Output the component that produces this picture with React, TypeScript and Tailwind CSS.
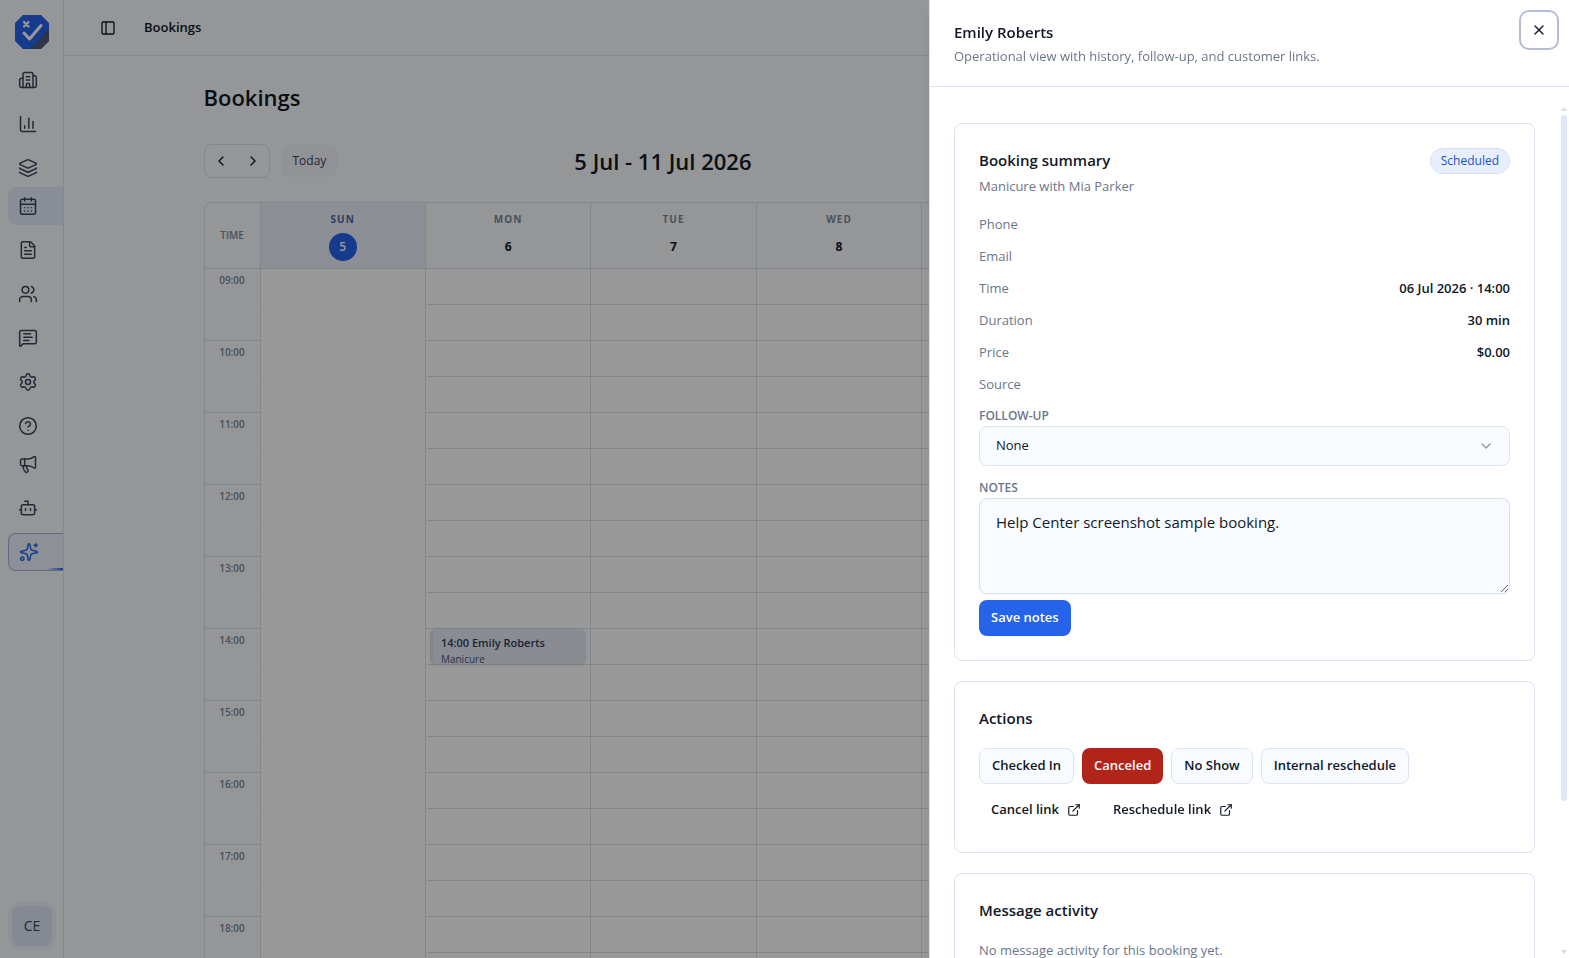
import React from "react";
import {
  Bot,
  Building2,
  CalendarDays,
  ChartColumn,
  ChevronDown,
  ChevronLeft,
  ChevronRight,
  CircleQuestionMark,
  ExternalLink,
  FileText,
  Layers,
  Megaphone,
  MessageSquareText,
  PanelLeft,
  Settings,
  Sparkles,
  Users,
  X,
  type LucideIcon,
} from "lucide-react";

type NavItem = { label: string; icon: LucideIcon; tight?: boolean; state?: "active" | "featured" };

const navItems: NavItem[] = [
  { label: "Business", icon: Building2 },
  { label: "Analytics", icon: ChartColumn },
  { label: "Services", icon: Layers },
  { label: "Bookings", icon: CalendarDays, tight: true, state: "active" },
  { label: "Documents", icon: FileText },
  { label: "Customers", icon: Users },
  { label: "Messages", icon: MessageSquareText },
  { label: "Settings", icon: Settings },
  { label: "Help", icon: CircleQuestionMark },
  { label: "Announcements", icon: Megaphone, tight: true },
  { label: "Assistant", icon: Bot },
  { label: "Upgrade", icon: Sparkles, state: "featured" },
];

const days = [
  { name: "SUN", date: 5 },
  { name: "MON", date: 6 },
  { name: "TUE", date: 7 },
  { name: "WED", date: 8 },
  { name: "THU", date: 9 },
  { name: "FRI", date: 10 },
  { name: "SAT", date: 11 },
];

const hours = ["09:00", "10:00", "11:00", "12:00", "13:00", "14:00", "15:00", "16:00", "17:00", "18:00"];

const details = [
  { label: "Phone", value: "" },
  { label: "Email", value: "" },
  { label: "Time", value: "06 Jul 2026 · 14:00" },
  { label: "Duration", value: "30 min" },
  { label: "Price", value: "$0.00" },
  { label: "Source", value: "" },
];

function Logo() {
  return (
    <svg viewBox="0 0 34 34" className="size-[34px]" aria-hidden="true">
      <defs>
        <clipPath id="logo-shape">
          <path d="M8 0h18l8 8v18l-8 8H8l-8-8V8z" />
        </clipPath>
        <linearGradient id="logo-fold" x1="0.400" y1="0.400" x2="0.800" y2="0.800">
          <stop offset="0" stopColor="#3d5596" />
          <stop offset="1" stopColor="#565c6b" />
        </linearGradient>
      </defs>
      <g clipPath="url(#logo-shape)">
        <rect width="34" height="34" fill="#2563eb" />
        <path d="M34 13 15 34h19z" fill="url(#logo-fold)" />
      </g>
      <path d="m9 18 5.500 6L26 10.500" fill="none" stroke="#fff" strokeWidth="3" strokeLinecap="round" strokeLinejoin="round" />
      <path d="m9 7 4.500 4.500M13.500 7 9 11.500" stroke="#fff" strokeWidth="2.200" strokeLinecap="round" />
    </svg>
  );
}

function Sidebar() {
  return (
    <aside className="flex w-16 shrink-0 flex-col border-r border-[#dfe4ee] bg-[#f8fafc] pt-[15px]">
      <a href="#home" aria-label="Home" className="ml-[15px] block">
        <Logo />
      </a>
      <nav className="mt-1.5 flex flex-col pl-2">
        {navItems.map(({ label, icon: Icon, tight, state }) => (
          <a
            key={label}
            href={"#" + label.toLowerCase()}
            aria-label={label}
            className={
              "relative flex h-[38px] items-center rounded-l-lg pl-2.5 " +
              (tight ? "" : "mt-1.5 ") +
              (state === "active" ? "bg-[#e4ebfa] " : "") +
              (state === "featured"
                ? "border border-r-0 border-[#a3b3da] bg-[#ebf0fb] text-[#2563eb]"
                : "text-[#38435a]")
            }
          >
            <Icon className="size-5" strokeWidth={1.8} />
            {state === "featured" && (
              <span className="absolute right-0 bottom-0 h-0.5 w-4 bg-linear-to-r from-transparent to-[#2563eb]" />
            )}
          </a>
        ))}
      </nav>
      <button
        type="button"
        className="mt-auto mb-3 ml-3 size-10 rounded-lg bg-[#dde5f7] text-sm text-[#334155] ring-4 ring-[#eff3fa]"
      >
        CE
      </button>
    </aside>
  );
}

function Calendar() {
  return (
    <div className="mt-6 overflow-hidden rounded-tl-lg border border-[#d9e0eb] bg-[#f8fafc] pr-2.5">
      <table className="w-full table-fixed border-separate border-spacing-0">
        <thead>
          <tr className="h-[66px]">
            <th className="w-14 border-r border-b border-[#d9e0eb] text-[10px] font-semibold text-[#7c8799]">TIME</th>
            {days.map((day, index) => (
              <th
                key={day.name}
                className={"border-r border-b border-[#d9e0eb] p-0 " + (index === 0 ? "bg-[#ebeffb]" : "")}
              >
                <div
                  className={
                    "text-[10px] leading-4 font-bold tracking-widest " +
                    (index === 0 ? "text-[#4a63a5]" : "text-[#7c8799]")
                  }
                >
                  {day.name}
                </div>
                <div
                  className={
                    "mx-auto mt-1.5 flex size-7 items-center justify-center rounded-full text-xs " +
                    (index === 0 ? "bg-[#2563eb] font-semibold text-white" : "font-bold text-slate-900")
                  }
                >
                  {day.date}
                </div>
              </th>
            ))}
          </tr>
        </thead>
        <tbody>
          {hours.map((hour) => (
            <React.Fragment key={hour}>
              <tr className="h-9">
                <th
                  rowSpan={2}
                  className="border-r border-b border-[#d9e0eb] p-0 pt-[3px] align-top text-[10px] leading-4 font-semibold text-[#7c8799]"
                >
                  {hour}
                </th>
                {days.map((day, index) => (
                  <td
                    key={day.name}
                    className={
                      "relative border-r border-b border-r-[#d9e0eb] bg-white p-0 " +
                      (index === 0 ? "border-b-[#fbfcfd]" : "border-b-[#d9e0eb]")
                    }
                  >
                    {hour === "14:00" && index === 1 && (
                      <button
                        type="button"
                        className="absolute inset-x-1 inset-y-0 overflow-hidden rounded-md border-l-3 border-[#d6dce9] bg-[#e4e9f5] px-2 pt-1.5 text-left shadow-sm"
                      >
                        <span className="block truncate text-[11px] leading-4 font-semibold text-[#2f3b55]">
                          14:00 Emily Roberts
                        </span>
                        <span className="block text-[10px] leading-4 text-[#4a566c]">Manicure</span>
                      </button>
                    )}
                  </td>
                ))}
              </tr>
              <tr className="h-9">
                {days.map((day, index) => (
                  <td
                    key={day.name}
                    className={
                      "border-r border-b border-r-[#d9e0eb] bg-white p-0 " +
                      (index === 0 ? "border-b-[#fbfcfd]" : "border-b-[#d9e0eb]")
                    }
                  />
                ))}
              </tr>
            </React.Fragment>
          ))}
        </tbody>
      </table>
    </div>
  );
}

function Page() {
  return (
    <div className="flex min-w-0 flex-1 flex-col">
      <header className="flex h-14 shrink-0 items-center border-b border-[#dfe4ee] pl-9">
        <button type="button" aria-label="Toggle sidebar" className="flex size-4 items-center justify-center">
          <PanelLeft className="size-4" />
        </button>
        <span className="ml-7 text-[13px] font-semibold">Bookings</span>
      </header>
      <main className="mx-auto w-full max-w-[1282px] px-7 pt-[25px]">
        <h1 className="text-[22px] leading-8 font-semibold">Bookings</h1>
        <div className="mt-[31px] flex items-center justify-between">
          <div className="flex items-center gap-3">
            <div className="flex h-[34px] w-[66px] items-center rounded-lg border border-[#d9e0eb]">
              <button type="button" aria-label="Previous week" className="flex h-full flex-1 items-center justify-center">
                <ChevronLeft className="size-4" />
              </button>
              <button type="button" aria-label="Next week" className="flex h-full flex-1 items-center justify-center">
                <ChevronRight className="size-4" />
              </button>
            </div>
            <button type="button" className="h-8 rounded-md bg-[#f0f3fa] px-[11px] text-xs font-medium text-[#38435a]">
              Today
            </button>
          </div>
          <h2 className="text-[22px] leading-8 font-semibold">5 Jul - 11 Jul 2026</h2>
          <div className="w-[441px]" />
        </div>
        <Calendar />
      </main>
    </div>
  );
}

const outlineButton =
  "flex h-9 items-center rounded-lg border border-[#dce4f2] bg-[#f8fbff] px-3 text-[13px] font-semibold";

function Card({ children }: { children: React.ReactNode }) {
  return <section className="rounded-lg border border-[#dde3f0] bg-white p-6">{children}</section>;
}

function Drawer() {
  return (
    <div
      role="dialog"
      aria-labelledby="drawer-title"
      className="fixed inset-y-0 right-0 flex w-[640px] flex-col border-l border-[#dde3f0] bg-white shadow-lg"
    >
      <header className="relative h-[87px] shrink-0 border-b border-[#dde3f0] px-6 pt-5">
        <h2 id="drawer-title" className="text-[15px] leading-6 font-semibold">
          Emily Roberts
        </h2>
        <p className="text-[13px] leading-6 text-[#6b7689]">
          Operational view with history, follow-up, and customer links.
        </p>
        <button
          type="button"
          aria-label="Close"
          className="absolute top-3 right-3 flex size-9 items-center justify-center rounded-lg ring-2 ring-[#b4bdd3]"
        >
          <X className="size-4" />
        </button>
      </header>
      <div className="mt-4 flex min-h-0 flex-1">
        <div className="flex min-w-0 flex-1 flex-col gap-5 overflow-y-auto px-6 pt-5 [scrollbar-width:none]">
          <Card>
            <div className="flex items-start justify-between">
              <h3 className="text-[15px] leading-6 font-semibold">Booking summary</h3>
              <span className="-mb-2 flex h-[26px] items-center rounded-full border border-[#d5e0f5] bg-[#e8effc] px-2.5 text-xs font-medium text-[#1d4fd0]">
                Scheduled
              </span>
            </div>
            <p className="mt-1 mb-[18px] text-[13px] leading-5 text-[#6b7689]">Manicure with Mia Parker</p>
            <dl className="flex flex-col gap-3">
              {details.map((row) => (
                <div key={row.label} className="flex justify-between text-[13px] leading-5">
                  <dt className="text-[#6b7689]">{row.label}</dt>
                  <dd className="font-semibold">{row.value}</dd>
                </div>
              ))}
            </dl>
            <label htmlFor="follow-up" className="mt-3 block text-xs leading-5 font-semibold text-[#6b7689]">
              FOLLOW-UP
            </label>
            <div className="relative">
              <select
                id="follow-up"
                className="block h-10 w-full appearance-none rounded-lg border border-[#dce4f2] bg-[#f8fbff] px-4 text-[13px]"
              >
                <option>None</option>
              </select>
              <ChevronDown className="pointer-events-none absolute top-3 right-4 size-4 text-[#8a94a6]" />
            </div>
            <label htmlFor="notes" className="mt-3 block text-xs leading-5 font-semibold text-[#6b7689]">
              NOTES
            </label>
            <textarea
              id="notes"
              defaultValue="Help Center screenshot sample booking."
              className="block h-24 w-full resize-y rounded-lg border border-[#d6e2f4] bg-[#f8fbff] px-4 py-[11px] text-[15px] leading-6 shadow-xs"
            />
            <button
              type="button"
              className="mt-1.5 h-9 rounded-lg bg-[#2563eb] px-3 text-[13px] font-semibold text-white"
            >
              Save notes
            </button>
          </Card>
          <Card>
            <h3 className="mb-[18px] text-[15px] leading-6 font-semibold">Actions</h3>
            <div className="flex flex-wrap gap-2">
              <button type="button" className={outlineButton}>
                Checked In
              </button>
              <button
                type="button"
                className="flex h-9 items-center rounded-lg bg-[#b0241a] px-3 text-[13px] font-semibold text-white"
              >
                Canceled
              </button>
              <button type="button" className={outlineButton}>
                No Show
              </button>
              <button type="button" className={outlineButton}>
                Internal reschedule
              </button>
            </div>
            <div className="mt-2 flex gap-2">
              <a href="#cancel" className="flex h-9 items-center gap-2 px-3 text-[13px] font-semibold">
                Cancel link
                <ExternalLink className="size-[14px]" />
              </a>
              <a href="#reschedule" className="flex h-9 items-center gap-2 px-3 text-[13px] font-semibold">
                Reschedule link
                <ExternalLink className="size-[14px]" />
              </a>
            </div>
          </Card>
          <Card>
            <h3 className="mb-[18px] text-[15px] leading-6 font-semibold">Message activity</h3>
            <p className="text-[13px] leading-5 text-[#6b7689]">No message activity for this booking yet.</p>
          </Card>
        </div>
        <div aria-hidden="true" className="flex w-2.5 flex-col items-center gap-1 py-1">
          <svg viewBox="0 0 6 4" className="h-1 w-1.5 fill-[#d5deeb]">
            <path d="M3 0 6 4H0z" />
          </svg>
          <div className="min-h-0 w-1.5 flex-1">
            <div className="h-19/23 rounded-full bg-[#e0e8f5]" />
          </div>
          <svg viewBox="0 0 6 4" className="h-1 w-1.5 fill-[#d5deeb]">
            <path d="M0 0h6L3 4z" />
          </svg>
        </div>
      </div>
    </div>
  );
}

export default function App() {
  return (
    <div className="flex h-screen overflow-hidden bg-[#f8fafc] font-['Open_Sans','Noto_Sans',sans-serif] text-[#111827]">
      <Sidebar />
      <Page />
      <div className="fixed inset-0 bg-black/40" />
      <Drawer />
    </div>
  );
}
